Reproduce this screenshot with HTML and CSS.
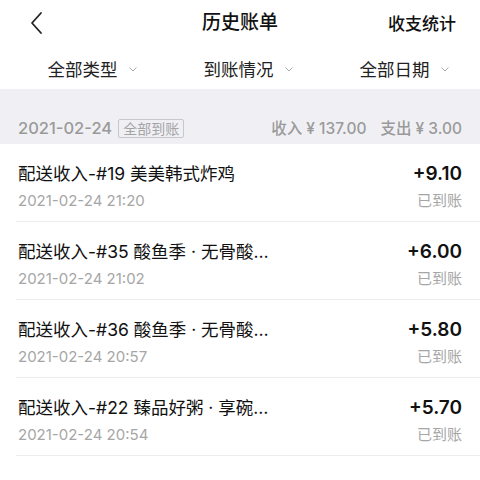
FILE: index.html
```html
<!DOCTYPE html>
<html lang="zh">
<head>
<meta charset="utf-8">
<link rel="stylesheet" href="styles.css">
</head>
<body>
<div class="page">
  <header class="topbar">
    <span class="back">
      <svg width="14" height="24" viewBox="0 0 14 24"><path d="M11 2 L2 12 L11 22" fill="none" stroke="#222" stroke-width="1.8" stroke-linecap="round" stroke-linejoin="round"/></svg>
    </span>
    <h1 class="title">历史账单</h1>
    <span class="action">收支统计</span>
  </header>
  <nav class="filters">
    <div class="filter">全部类型<svg class="chev" width="8" height="5" viewBox="0 0 8 5"><path d="M0.5 0.5 L4 4 L7.5 0.5" fill="none" stroke="#aaa" stroke-width="1"/></svg></div>
    <div class="filter">到账情况<svg class="chev" width="8" height="5" viewBox="0 0 8 5"><path d="M0.5 0.5 L4 4 L7.5 0.5" fill="none" stroke="#aaa" stroke-width="1"/></svg></div>
    <div class="filter">全部日期<svg class="chev" width="8" height="5" viewBox="0 0 8 5"><path d="M0.5 0.5 L4 4 L7.5 0.5" fill="none" stroke="#aaa" stroke-width="1"/></svg></div>
  </nav>
  <section class="day">
    <div class="day-left"><span class="day-date">2021-02-24</span><span class="tag">全部到账</span></div>
    <div class="day-sum">收入 ¥ 137.00<span class="gap"></span>支出 ¥ 3.00</div>
  </section>
  <ul class="list">
    <li class="item">
      <div class="main"><div class="name">配送收入-#19 美美韩式炸鸡</div><div class="time">2021-02-24 21:20</div></div>
      <div class="side"><div class="amount">+9.10</div><div class="status">已到账</div></div>
    </li>
    <li class="item">
      <div class="main"><div class="name">配送收入-#35 酸鱼季 · 无骨酸…</div><div class="time">2021-02-24 21:02</div></div>
      <div class="side"><div class="amount">+6.00</div><div class="status">已到账</div></div>
    </li>
    <li class="item">
      <div class="main"><div class="name">配送收入-#36 酸鱼季 · 无骨酸…</div><div class="time">2021-02-24 20:57</div></div>
      <div class="side"><div class="amount">+5.80</div><div class="status">已到账</div></div>
    </li>
    <li class="item">
      <div class="main"><div class="name">配送收入-#22 臻品好粥 · 享碗…</div><div class="time">2021-02-24 20:54</div></div>
      <div class="side"><div class="amount">+5.70</div><div class="status">已到账</div></div>
    </li>
  </ul>
</div>
</body>
</html>
```
FILE: styles.css
```css
* { box-sizing: border-box; margin: 0; padding: 0; }
html, body { background: #fff; }
body {
  font-family: "Inter", "Noto Sans CJK SC", sans-serif;
  color: #111;
  width: 480px;
  height: 480px;
  overflow: hidden;
}
.page { display: flex; flex-direction: column; }
.topbar {
  height: 45px;
  display: flex;
  align-items: center;
  justify-content: space-between;
  padding: 0 24px 0 30px;
  position: relative;
}
.back { display: flex; width: 14px; height: 24px; }
.title {
  position: absolute;
  left: 0; right: 0;
  text-align: center;
  font-size: 19px;
  font-weight: 500;
  line-height: 45px;
  pointer-events: none;
}
.action { font-size: 17px; font-weight: 500; }
.filters {
  height: 44px;
  display: grid;
  grid-template-columns: repeat(3, 156px);
  padding-left: 14px;
  align-items: center;
}
.filter {
  display: flex;
  align-items: center;
  justify-content: center;
  gap: 11px;
  font-size: 17.5px;
  color: #222;
  padding-top: 2px;
}
.chev { margin-top: 2px; }
.day {
  background: #f0f0f4;
  height: 55px;
  display: flex;
  justify-content: space-between;
  align-items: flex-end;
  padding: 0 18px 6px 18px;
  color: #9a9a9a;
}
.day-left { display: flex; align-items: center; gap: 6px; }
.day-date { font-size: 16.5px; font-weight: 500; }
.tag {
  font-size: 14px;
  line-height: 17px;
  border: 1px solid #c8c8c8;
  padding: 0 4px;
  border-radius: 2px;
  color: #a4a4a4;
}
.day-sum { font-size: 15.5px; font-weight: 500; display: flex; }
.gap { width: 14px; }
.list { list-style: none; }
.item {
  height: 78px;
  display: flex;
  justify-content: space-between;
  padding: 18px 18px 0 18px;
  position: relative;
}
.item::after {
  content: "";
  position: absolute;
  left: 16px; right: 0; bottom: 0;
  height: 1px;
  background: #ececec;
}
.name { font-size: 17.5px; line-height: 24px; color: #111; }
.time { font-size: 15px; line-height: 20px; margin-top: 5px; color: #a6a6a6; }
.side { text-align: right; }
.amount { font-size: 19px; line-height: 24px; font-weight: 600; color: #111; }
.status { font-size: 15px; line-height: 20px; margin-top: 5px; color: #a6a6a6; }
```
